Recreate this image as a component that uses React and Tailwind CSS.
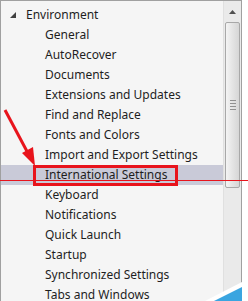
const items = [
  'General',
  'AutoRecover',
  'Documents',
  'Extensions and Updates',
  'Find and Replace',
  'Fonts and Colors',
  'Import and Export Settings',
  'International Settings',
  'Keyboard',
  'Notifications',
  'Quick Launch',
  'Startup',
  'Synchronized Settings',
  'Tabs and Windows',
];

function Scrollbar() {
  return (
    <div className="flex w-[18px] flex-col bg-[#eaeaea] border-l border-[#e0e0e0]">
      <div className="flex h-[21px] items-center justify-center">
        <svg width="7" height="4" viewBox="0 0 7 4">
          <path d="M0 4 L3.5 0 L7 4 Z" fill="#505050" />
        </svg>
      </div>
      <div className="mx-[1px] h-[166px] rounded-[2px] border border-[#a8a8a8] bg-gradient-to-r from-[#f4f4f4] via-[#e4e4e4] to-[#d6d6d6] flex items-center justify-center">
        <div className="flex flex-col gap-[2px]">
          <div className="h-px w-[6px] bg-[#909090]" />
          <div className="h-px w-[6px] bg-[#909090]" />
          <div className="h-px w-[6px] bg-[#909090]" />
          <div className="h-px w-[6px] bg-[#909090]" />
        </div>
      </div>
      <div className="flex-1" />
    </div>
  );
}

export default function App() {
  return (
    <div className="relative h-[301px] w-[248px] overflow-hidden bg-white font-['Noto_Sans',sans-serif] text-[12px] text-[#1e1e1e]">
      <div className="flex h-[320px] w-[242px] border border-[#a0a0a0] bg-[#f5f5f5]">
        <div className="flex-1 pt-[4px]">
          <div className="flex h-[20px] items-center gap-[10px] pl-[9px]">
            <svg width="6" height="6" viewBox="0 0 6 6">
              <path d="M6 0 L6 6 L0 6 Z" fill="#404040" />
            </svg>
            <span>Environment</span>
          </div>
          {items.map((label) => (
            <div
              key={label}
              className={
                label === 'International Settings'
                  ? 'flex h-[20px] items-center bg-[#c9cad8] pl-[44px]'
                  : 'flex h-[20px] items-center pl-[44px]'
              }
            >
              <span className="whitespace-nowrap">{label}</span>
            </div>
          ))}
        </div>
        <Scrollbar />
      </div>

      {/* red highlight box */}
      <div className="absolute left-[33px] top-[165px] h-[21px] w-[145px] border-[3px] border-[#e8141c]" />
      {/* red horizontal line */}
      <div className="absolute left-0 top-[180px] h-px w-[248px] bg-[#e8141c]" />
      {/* arrow */}
      <svg className="absolute left-0 top-0" width="248" height="301">
        <line x1="5" y1="110" x2="30" y2="157" stroke="#e8141c" strokeWidth="3" />
        <path d="M35 166 L22 153 L33 147 Z" fill="#e8141c" />
      </svg>
      {/* window corner */}
      <svg className="absolute left-0 top-0" width="248" height="301">
        <path d="M205 301 L242 282 L242 301 Z" fill="#ffffff" />
        <path d="M214 301 L242 287 L242 301 Z" fill="#3aa5e0" />
      </svg>
    </div>
  );
}
